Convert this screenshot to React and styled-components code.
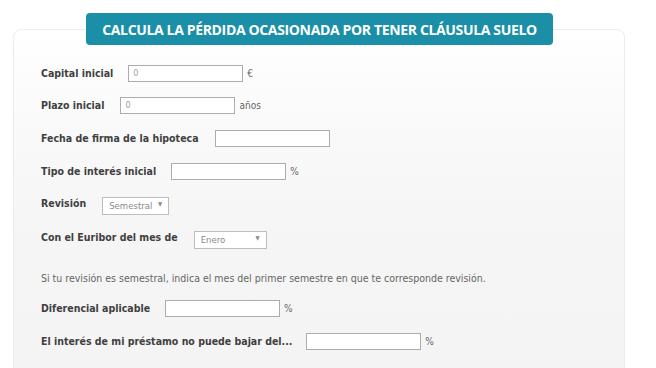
import React from "react";
import styled, { createGlobalStyle } from "styled-components";

const GlobalStyle = createGlobalStyle`
  html, body {
    margin: 0;
    padding: 0;
    background: #ffffff;
  }
  body {
    font-family: "DejaVu Sans Condensed", "DejaVu Sans", Tahoma, sans-serif;
  }
`;

const Page = styled.div`
  width: 656px;
  height: 368px;
  overflow: hidden;
  padding: 13px 0 0 13px;
  box-sizing: border-box;
`;

const Banner = styled.div`
  position: relative;
  z-index: 1;
  width: 467px;
  height: 32px;
  margin: 0 0 0 73px;
  background: #1a8fa7;
  border-radius: 4px;
  display: flex;
  align-items: center;
  justify-content: center;
  color: #ffffff;
  font-family: "Open Sans", "Noto Sans", sans-serif;
  font-weight: 700;
  font-size: 14px;
  letter-spacing: -0.35px;
  text-transform: uppercase;
`;

const Panel = styled.div`
  width: 612px;
  height: 360px;
  margin-top: -16px;
  box-sizing: border-box;
  border: 1px solid #ececec;
  border-radius: 8px;
  background: linear-gradient(to bottom, #ffffff 0%, #f9f9f9 30%, #f5f5f5 60%, #f4f4f4 100%);
  padding: 34px 0 0 27px;
  display: flex;
  flex-direction: column;
`;

const Row = styled.div`
  display: flex;
  align-items: center;
  height: 18px;
  margin-top: ${(p) => p.$gap || 0}px;
`;

const Label = styled.label`
  font-size: 10.5px;
  font-weight: 700;
  color: #3f3f3f;
  margin-right: ${(p) => p.$space || 14}px;
  white-space: nowrap;
`;

const Field = styled.input`
  width: 115px;
  height: 17px;
  box-sizing: border-box;
  border: 1px solid #acacac;
  background: #ffffff;
  padding: 0 0 0 4px;
  margin: 0;
  font-family: "DejaVu Sans Condensed", "DejaVu Sans", sans-serif;
  font-size: 9px;
  color: #a0a0a0;
  outline: none;
`;

const Unit = styled.span`
  font-size: 10px;
  color: #666666;
  margin-left: 4px;
`;

const SelectBox = styled.div`
  position: relative;
  width: ${(p) => p.$width}px;
  height: 18px;
`;

const Select = styled.select`
  appearance: none;
  -webkit-appearance: none;
  width: 100%;
  height: 100%;
  box-sizing: border-box;
  border: 1px solid #bdbdbd;
  border-radius: 0;
  background: #ffffff;
  padding: 0 0 0 6px;
  margin: 0;
  font-family: "DejaVu Sans Condensed", "DejaVu Sans", sans-serif;
  font-size: 9.5px;
  color: #8a8a8a;
  outline: none;
`;

const Arrow = styled.span`
  position: absolute;
  right: 7px;
  top: 50%;
  transform: translateY(-50%);
  font-size: 6px;
  color: #8a8a8a;
  pointer-events: none;
`;

const Note = styled.p`
  margin: ${(p) => p.$gap}px 0 0 0;
  height: 18px;
  line-height: 18px;
  font-size: 10.5px;
  color: #666666;
`;

export default function App() {
  return (
    <>
      <GlobalStyle />
      <Page>
        <Banner>Calcula la pérdida ocasionada por tener cláusula suelo</Banner>
        <Panel>
          <Row>
            <Label $space={15}>Capital inicial</Label>
            <Field defaultValue="0" />
            <Unit>€</Unit>
          </Row>
          <Row $gap={14}>
            <Label $space={16}>Plazo inicial</Label>
            <Field defaultValue="0" />
            <Unit>años</Unit>
          </Row>
          <Row $gap={15}>
            <Label $space={16}>Fecha de firma de la hipoteca</Label>
            <Field defaultValue="" />
          </Row>
          <Row $gap={15}>
            <Label $space={15}>Tipo de interés inicial</Label>
            <Field defaultValue="" />
            <Unit>%</Unit>
          </Row>
          <Row $gap={14}>
            <Label $space={16}>Revisión</Label>
            <SelectBox $width={67}>
              <Select defaultValue="Semestral">
                <option>Semestral</option>
                <option>Anual</option>
              </Select>
              <Arrow>▼</Arrow>
            </SelectBox>
          </Row>
          <Row $gap={16}>
            <Label $space={16}>Con el Euribor del mes de</Label>
            <SelectBox $width={73}>
              <Select defaultValue="Enero">
                <option>Enero</option>
                <option>Febrero</option>
              </Select>
              <Arrow>▼</Arrow>
            </SelectBox>
          </Row>
          <Note $gap={23}>
            Si tu revisión es semestral, indica el mes del primer semestre en que te corresponde revisión.
          </Note>
          <Row $gap={12}>
            <Label $space={15}>Diferencial aplicable</Label>
            <Field defaultValue="" />
            <Unit>%</Unit>
          </Row>
          <Row $gap={15}>
            <Label $space={14}>El interés de mi préstamo no puede bajar del...</Label>
            <Field defaultValue="" />
            <Unit>%</Unit>
          </Row>
        </Panel>
      </Page>
    </>
  );
}
